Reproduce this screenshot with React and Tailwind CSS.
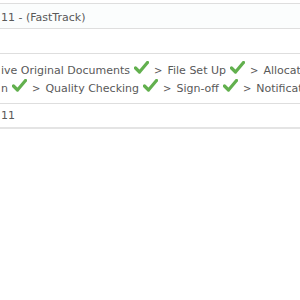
import React from "react";

const Tick = () => (
  <svg width="15" height="13" viewBox="0 0 15 13" className="inline-block ml-[4px] mr-[5px] -mt-[7px] align-middle">
    <path d="M1.5 7 L5.5 11 L13.5 1.5" fill="none" stroke="#62b04e" strokeWidth="3.2" strokeLinecap="round" strokeLinejoin="round" />
  </svg>
);

const Step = ({ label, done, first }) => (
  <span className="whitespace-nowrap">
    {!first && <span className="mr-[5px] text-[10px]">&gt;</span>}
    {label}
    {done ? <Tick /> : <span className="mr-[6px]" />}
  </span>
);

export default function App() {
  return (
    <div className="w-[300px] h-[300px] bg-white overflow-hidden text-[11px] text-[#595959]" style={{ fontFamily: '"DejaVu Sans", Verdana, sans-serif' }}>
      <div className="h-[3px]" />
      <div className="border-t border-[#3f7a6e] bg-[#fbfdfd] h-[26px] flex items-center pl-[1px] pt-[4px] border-b border-[#dedede]">
        11 - (FastTrack)
      </div>
      <div className="h-[25px] border-b border-[#dedede]" />
      <div className="pl-[1px] pt-[8px] pb-[5px] leading-[18px] border-b border-[#dedede] whitespace-nowrap overflow-hidden">
        <div>
          <Step first label="ive Original Documents" done />
          <Step label="File Set Up" done />
          <Step label="Allocation" />
        </div>
        <div>
          <Step first label="n" done />
          <Step label="Quality Checking" done />
          <Step label="Sign-off" done />
          <Step label="Notification" />
        </div>
      </div>
      <div className="h-[25px] flex items-center pl-[1px] pt-[1px] border-b-2 border-[#e4e4e4]">
        11
      </div>
    </div>
  );
}
